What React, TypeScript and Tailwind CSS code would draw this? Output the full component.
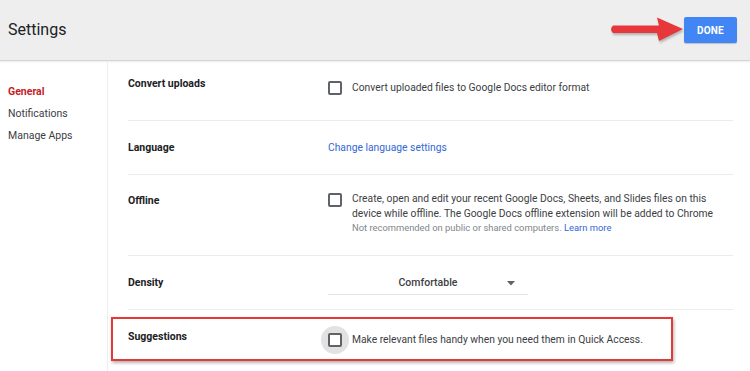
function Checkbox() {
  return <span className="block w-[14px] h-[14px] shrink-0 rounded-[2px] border-2 border-[#5f6368] bg-white" />
}

function Row({ label, children, className = '', labelClass = '' }: { label: string; children: React.ReactNode; className?: string; labelClass?: string }) {
  return (
    <div className={`flex border-b border-[#ececec] ${className}`}>
      <div className={`w-[200px] shrink-0 font-bold text-[10.5px] text-[#202124] leading-[16px] ${labelClass}`}>{label}</div>
      {children}
    </div>
  )
}

export default function App() {
  return (
    <div className="relative w-[750px] h-[371px] overflow-hidden bg-white text-[#3c4043]" style={{ fontFamily: 'Roboto, "Liberation Sans", sans-serif' }}>
      {/* Header */}
      <div className="h-[61px] bg-[#eeeeee] border-b border-[#d4d4d4] shadow-[0_1px_2px_rgba(0,0,0,0.08)] flex items-center justify-between pl-2 pr-[13px]">
        <h1 className="text-[16px] text-[#202124] leading-none">Settings</h1>
        <div className="flex items-center">
          <svg width="75" height="26" viewBox="0 0 75 26" className="drop-shadow-[1px_2px_1px_rgba(0,0,0,0.25)]">
            <path d="M4 8.5 L50 8.5 L48 0.5 L74 12 L50 24 L48 16 L4 16 Q0 12.25 4 8.5 Z" fill="#e8373a" />
          </svg>
          <button className="w-[53px] h-[26px] rounded-[2px] bg-[#4285f4] text-white text-[10px] font-bold tracking-[0.2px] shadow-[0_1px_1px_rgba(0,0,0,0.2)]">DONE</button>
        </div>
      </div>

      <div className="flex">
        {/* Sidebar */}
        <div className="w-[108px] h-[310px] shrink-0 border-r border-[#eeeeee] pt-[20px] pl-2 text-[10.5px] leading-[22px] text-[#3c4043]">
          <div className="text-[#c5221f] font-bold">General</div>
          <div>Notifications</div>
          <div>Manage Apps</div>
        </div>

        {/* Main */}
        <div className="flex-1 pl-5 pr-[17px]">
          <Row label="Convert uploads" className="h-[60px]" labelClass="pt-[15px]">
            <div className="flex items-center gap-[10px] pt-[19px] h-fit text-[10.3px]">
              <Checkbox />
              <span>Convert uploaded files to Google Docs editor format</span>
            </div>
          </Row>

          <Row label="Language" className="h-[54px] items-center">
            <a className="text-[10.3px] text-[#3367d6]">Change language settings</a>
          </Row>

          <Row label="Offline" className="h-[81px]" labelClass="pt-[18px]">
            <div className="flex gap-[10px] pt-[17px]">
              <div className="pt-[1px]"><Checkbox /></div>
              <div className="text-[10.3px] leading-[14.5px]">
                <div>Create, open and edit your recent Google Docs, Sheets, and Slides files on this</div>
                <div>device while offline. The Google Docs offline extension will be added to Chrome</div>
                <div className="text-[9.4px] text-[#80868b]">
                  Not recommended on public or shared computers. <a className="text-[#3367d6]">Learn more</a>
                </div>
              </div>
            </div>
          </Row>

          <Row label="Density" className="h-[54px] items-center">
            <div className="w-[200px] h-[22px] grid grid-cols-[1fr_auto_1fr] items-center border-b border-[#e3e3e3] -mb-[2px]">
              <span />
              <span className="text-[10.5px] font-medium text-[#3c4043]">Comfortable</span>
              <svg width="8" height="5" viewBox="0 0 8 5" className="justify-self-end mr-[13px]">
                <path d="M0 0 L8 0 L4 4.5 Z" fill="#5f6368" />
              </svg>
            </div>
          </Row>

          <div className="flex h-[61px]">
            <div className="w-[200px] shrink-0 font-bold text-[10.5px] text-[#202124] leading-[16px] pt-[19px]">Suggestions</div>
            <div className="flex items-center gap-[3px] pt-[16px] h-fit text-[10.3px]">
              <span className="-ml-[7px] w-[28px] h-[28px] rounded-full bg-[#e2e2e2] flex items-center justify-center">
                <Checkbox />
              </span>
              <span>Make relevant files handy when you need them in Quick Access.</span>
            </div>
          </div>
        </div>
      </div>

      {/* annotation box */}
      <div className="absolute left-[111px] top-[317px] w-[562px] h-[44px] border-2 border-[#e53935] shadow-[1px_2px_3px_rgba(0,0,0,0.3)]" />
    </div>
  )
}
